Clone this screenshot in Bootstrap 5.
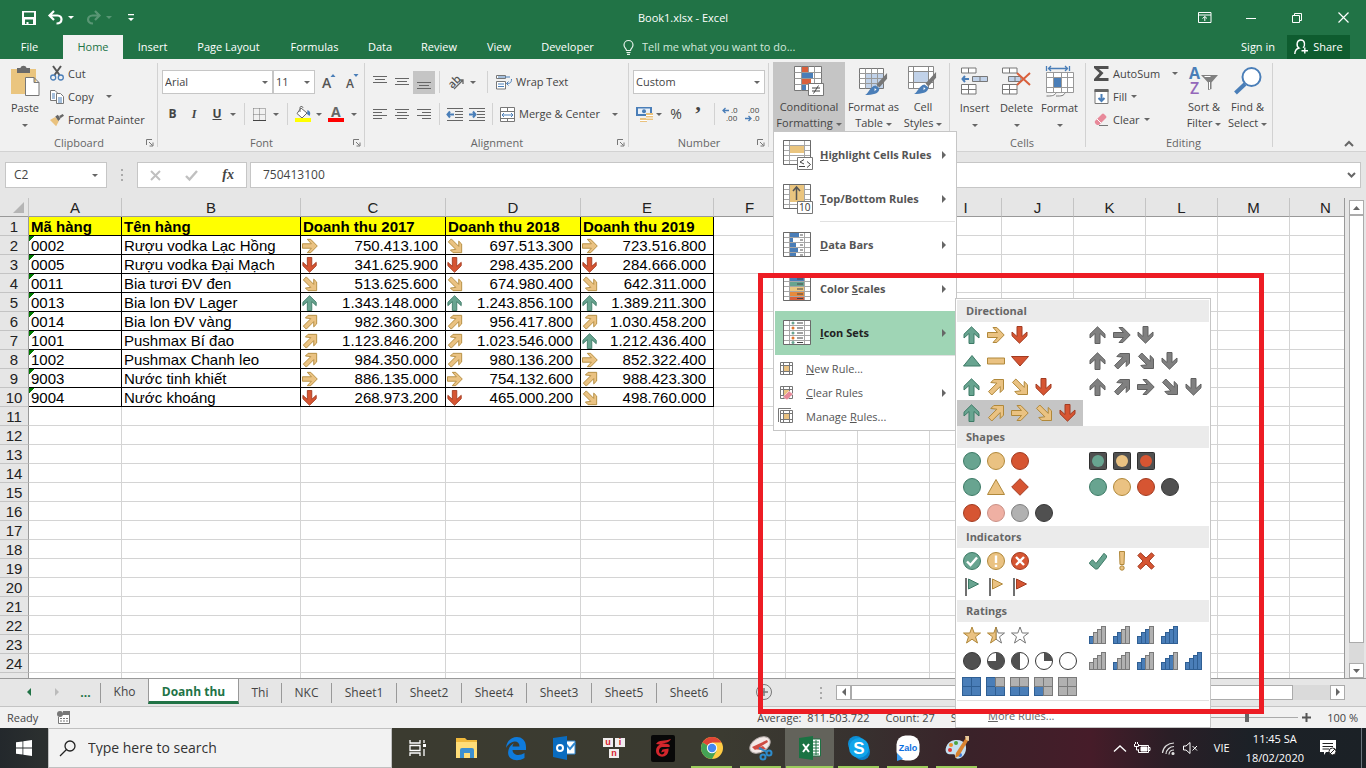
<!DOCTYPE html>
<html lang="en">
<head>
<meta charset="utf-8">
<meta name="viewport" content="width=device-width, initial-scale=1">
<title>Book1.xlsx - Excel</title>
<link rel="stylesheet" href="https://cdn.jsdelivr.net/npm/bootstrap@5.3.0/dist/css/bootstrap.min.css">
<style>
:root{--green:#217346;--line:#d4d4d4;--edge:#c6c6c6;--ink:#444}
body{font-family:"Open Sans","Noto Sans",sans-serif;font-size:11px;line-height:16px;color:var(--ink);background:#e6e6e6}
button,input,select{font:inherit;color:inherit}
button{background:none;border:0;padding:0;text-align:center}
svg{display:block;flex:none;overflow:visible}
.s12{font-size:12px}
.caret{display:inline-block;flex:none;width:0;height:0;border:3px solid transparent;border-top-color:#666;border-bottom:0}
.caret.inv{border-top-color:#fff}
.ln{fill:none;stroke:#666}
/* title bar */
.titlebar{height:35px;background:var(--green);color:#fff;display:grid;grid-template-columns:1fr auto 1fr}
.quick{padding-left:22px}
.winctl{display:grid;grid-template-columns:46px 46px 46px 46px;justify-content:end}
.winctl svg{margin:auto}
.tabs{height:24px;background:var(--green);color:#fff;display:grid;grid-template-columns:59px 4px 60px 59px 93px 79px 52px 66px 54px 83px 14px 1fr auto auto}
.tabs button{color:#fff}
.tabs .on{background:#f1f1f1;color:var(--green)}
.tellme{width:200px;background:none;border:0;padding:0;color:#d3e8dc;outline:0}
.tellme::placeholder{color:#d3e8dc;opacity:1}
.share{background:#0e5c2f;width:63px;margin-right:16px}
/* ribbon */
.ribbon{height:93px;background:#f1f1f1;border-bottom:1px solid #d2d2d2;display:grid;grid-template-columns:158px 207px 264px 140px 181px 136px 187px 1fr}
.grp{position:relative;padding:3px 0 0;display:flex;flex-direction:column}
.grp::after{content:"";position:absolute;right:0;top:4px;bottom:4px;width:1px;background:#d2d2d2}
.grp.last::after{display:none}
.gbody{height:70px}
.glabel{display:grid;grid-template-columns:1fr auto;text-align:center;color:#666;padding:3px 4px 0 12px;align-items:center}
.vr1{width:1px;height:22px;background:#d2d2d2;justify-self:center}
.big{display:flex;flex-direction:column;align-items:center;height:69px;white-space:nowrap}
.big .pic{height:38px;display:flex;align-items:center;justify-content:center}
.row3{display:grid;grid-template-rows:23px 23px 23px;justify-items:start}
.row3 button{display:flex;align-items:center;gap:4px;white-space:nowrap}
.tools{display:grid;align-items:center;justify-items:center;height:32px}
.tools button{display:flex;align-items:center;justify-content:center;width:22px;height:23px}
.clip-tools{grid-template-columns:50px 1fr}
.style-tools{grid-template-columns:4px 72px 57px 42px}
.cell-tools{grid-template-columns:4px 41px 43px 43px}
.edit-tools{grid-template-columns:8px 88px 44px 43px}
.font-a{grid-template-columns:111px 42px 27px 20px}
.font-b{grid-template-columns:21px 22px 24px 8px 14px 16px 18px 4px 28px 4px 30px 6px}
.align-a{grid-template-columns:22px 22px 22px 9px 24px 10px 18px 1fr}
.align-b{grid-template-columns:22px 22px 22px 9px 22px 22px 8px 1fr}
.num-b{grid-template-columns:22px 8px 26px 18px 14px 18px 26px}
.ital{font-family:"Liberation Serif",serif}
.fx{font:italic 700 14px/18px "Liberation Serif",serif}
.pct{font-size:14px}
.comma{font:700 22px/44px "Liberation Serif",serif}
.pick{appearance:none;height:24px;width:100%;border:1px solid var(--edge);border-radius:0;padding:0 2px;background:#fff url("data:image/svg+xml,%3Csvg xmlns='http://www.w3.org/2000/svg' width='6' height='3'%3E%3Cpath d='M0 0h6L3 3z' fill='%23666'/%3E%3C/svg%3E") no-repeat right 4px center}
.pressed{background:#c5c5c5}
/* formula bar */
.fbar{height:46px;padding:10px 5px;display:grid;grid-template-columns:102px 30px 110px 3px 1fr}
.fbox{background:#fff;border:1px solid var(--edge);height:26px;display:flex;align-items:center}
.fbox input{border:0;background:none;outline:0;min-width:0;flex:1}
/* worksheet */
.sheetarea{flex:1;min-height:0;display:grid;grid-template-columns:minmax(0,1fr) 21px;border-bottom:1px solid #999;overflow:hidden}
.gridwrap{overflow:hidden;border-right:1px solid #999}
.cells{border-collapse:separate;border-spacing:0;table-layout:fixed;width:1361px;background:#fff;font:15px/17px "Liberation Sans",Arial,sans-serif;color:#000}
.cells th,.cells td{height:19px;padding:1px 2px 0;border-right:1px solid var(--line);border-bottom:1px solid var(--line);white-space:nowrap;overflow:hidden;font-weight:400}
.cells thead th{background:#e6e6e6;border-color:#c4c4c4;border-bottom-color:#999;text-align:center;padding:1px 0 0;color:#222}
.cells tbody th{background:#e6e6e6;text-align:center;border-right-color:#999;border-bottom-color:#c4c4c4;padding:1px 0 0;color:#222}
.cells td.bx{border-color:#000}
.cells tr.hd td.bx{background:#ff0;font-weight:700;padding-top:0}
.cells td.er{background:linear-gradient(135deg,#007a00 4px,transparent 4px) no-repeat}
.cells td.val{padding-left:1px}
.num{display:flex;justify-content:space-between;align-items:center;padding-right:5px;height:17px}
.vscroll{display:flex;flex-direction:column;padding:2px 2px 0 4px}
.sbtn{border:1px solid #ababab;background:#fff;width:15px;height:15px;flex:none;display:flex;align-items:center;justify-content:center}
.track{background:#dadada;flex:1}
.thumb{background:#fff;border:1px solid #ababab}
.vtrack{padding-bottom:20px}
.htrack{height:15px;padding-right:37px}
.hscroll{padding-right:21px}
/* sheet tabs */
.stabs{height:28px;border-bottom:1px solid #c4c4c4;display:grid;grid-template-columns:15px 28px 28px 30px 47px 91px 43px 50px repeat(6,65px) 84px 30px 1fr;font-size:12px}
.stabs button{position:relative;padding-bottom:1px}
.stabs .dv{border-right:1px solid #999;height:20px;margin-top:4px}
.stabs .act{background:#fff;color:var(--green);font-weight:700;border:1px solid #999;border-top:0;border-bottom:3px solid var(--green);height:25px;font-size:12px;padding:4px 0 0}
.stabs .more{color:var(--green);font-weight:700}
.status{height:21px;background:#f1f1f1;display:flex;align-items:center;padding:0 8px 0 7px}
.sums{width:434px}
.zoomr{appearance:none;width:103px;height:12px;background:linear-gradient(#aaa,#aaa) center/100% 1px no-repeat}
.zoomr::-webkit-slider-thumb{appearance:none;width:4px;height:9px;background:#666}
/* conditional formatting menus */
.cmenu{position:absolute;z-index:5;left:773px;top:131px;width:184px;background:#fff;border:1px solid var(--edge);padding:1px;color:#444}
.mi{display:grid;grid-template-columns:44px 1fr 15px;align-items:center;height:44px;width:100%;text-align:left;font-weight:700;color:#555;padding-left:1px}
.mi svg{margin-left:7px}
.mi .tri,.ms .tri{width:0;height:0;border:4px solid transparent;border-left-color:#666;border-right:0;margin-left:2px}
.mi.hot{background:#9fd5b5;color:#222}
.ms{display:grid;grid-template-columns:31px 1fr 15px;align-items:center;height:24px;width:100%;text-align:left;color:#555}
.ms svg{margin-left:3px}
.msep{height:2px;border-top:1px solid #e1e1e1;margin-left:45px}
.gallery{position:absolute;z-index:6;left:955px;top:298px;width:256px;background:#fff;border:1px solid var(--edge);padding:1px}
.gh{background:#ebebeb;height:22px;line-height:22px;padding-left:9px;font-weight:700;color:#666;font-size:11px;margin:0}
.gr{display:grid;grid-template-columns:1fr 1fr;height:26px}
.gr button{display:flex;gap:6px;padding-left:6px;align-items:center}
.gmore{height:26px;padding:5px 0 0 31px;color:#666;text-align:left;display:block;width:100%;border-top:1px solid #e1e1e1}
.ic{stroke-width:1}
.g{fill:#68a490;stroke:#3d7a66}.y{fill:#eac282;stroke:#b0883a}.r{fill:#d65532;stroke:#a23c22}
.k{fill:#808080;stroke:#606060}.d{fill:#505050;stroke:#383838}.p{fill:#efb0a3;stroke:#c99086}.l{fill:#b1b1b1;stroke:#808080}
.marker{position:absolute;z-index:9;left:758px;top:273px;width:506px;height:441px;border:5px solid #ed1c24;pointer-events:none}
/* taskbar */
.taskbar{height:40px;color:#fff;background:linear-gradient(90deg,#23282c 0,#2b2f2f 40px,#3b3b30 392px,#3b3b31 720px,#37312f 860px,#3a2229 970px,#461c29 1090px,#2a1e26 1170px,#1c2127 1250px,#1b2126 100%);display:grid;grid-template-columns:48px 344px 50px repeat(11,49px) 1fr}
.taskbar>button{display:flex;align-items:center;justify-content:center;position:relative}
.search{background:#f2f2f2;border:1px solid #c0c0c0;display:flex;align-items:center;color:#333}
.search input{border:0;background:none;outline:0;padding:0;font-size:14px;flex:1}
.search input::placeholder{color:#333;opacity:1}
.run::after{content:"";position:absolute;left:4px;right:4px;bottom:0;height:2px;background:#9ccc5c}
.cur{background:#63635b}
.cur::after{left:1px;right:1px}
.deskedge{height:40px;border-left:1px solid #6c757d}
.logo{font-family:"Liberation Sans",sans-serif;font-weight:700}
</style>
</head>
<body>
<svg width="0" height="0" class="position-absolute" aria-hidden="true">
<defs>
<symbol id="up" viewBox="0 0 18 18"><path d="M8.500.8L16 8.200V12L11 7.500V17.500H6V7.500L1 12V8.200Z"/></symbol>
<symbol id="rt" viewBox="0 0 18 18"><path d="M17.200 9L9.800 1.500H6L10.500 6.500H.5V11.500H10.500L6 16.500H9.800Z"/></symbol>
<symbol id="dn" viewBox="0 0 18 18"><path d="M8.500 17.200L16 9.800V6L11 10.500V.5H6V10.500L1 6V9.800Z"/></symbol>
<symbol id="ne" viewBox="0 0 18 18"><path d="M3.800 4.500L6.800 1.500H16.500V11.200L13.200 14.500V8.600L4.800 17L1.500 13.600L9.900 5.200Z"/></symbol>
<symbol id="se" viewBox="0 0 18 18"><path d="M3.800 13.500L6.800 16.500H16.500V6.800L13.200 3.500V9.400L4.800 1L1.500 4.400L9.900 12.800Z"/></symbol>
<symbol id="tu" viewBox="0 0 18 18"><path d="M9 3.500L17.500 14H.5Z"/></symbol>
<symbol id="da" viewBox="0 0 18 18"><path d="M.5 6H17.500V12H.5Z"/></symbol>
<symbol id="td" viewBox="0 0 18 18"><path d="M.5 4.500H17.500L9 14Z"/></symbol>
<symbol id="ci" viewBox="0 0 18 18"><circle cx="9" cy="9" r="8.500"/></symbol>
<symbol id="tr" viewBox="0 0 18 18"><path d="M9 1.500L17.500 16.500H.5Z"/></symbol>
<symbol id="di" viewBox="0 0 18 18"><path d="M9 .7L17.300 9L9 17.300L.7 9Z"/></symbol>
<symbol id="li" viewBox="0 0 18 18"><rect x=".5" y=".5" width="17" height="17" rx="1" fill="#505050" stroke="#303030"/><circle cx="9" cy="9" r="6" stroke="none"/></symbol>
<symbol id="cok" viewBox="0 0 18 18"><circle cx="9" cy="9" r="8.500"/><path d="M4 9.500L7.500 13L14 5.500" fill="none" stroke="#fff" stroke-width="2.400"/></symbol>
<symbol id="cex" viewBox="0 0 18 18"><circle cx="9" cy="9" r="8.500"/><path d="M9 3.500V11M9 12.800V15" fill="none" stroke="#fff" stroke-width="2.400"/></symbol>
<symbol id="cno" viewBox="0 0 18 18"><circle cx="9" cy="9" r="8.500"/><path d="M5 5L13 13M13 5L5 13" fill="none" stroke="#fff" stroke-width="2.400"/></symbol>
<symbol id="ok" viewBox="0 0 18 18"><path d="M.7 10.500L3.500 7.700L7 11.500L15 1.300L17.500 3.800V5.500L8.500 17H6.500L.7 12Z"/></symbol>
<symbol id="ex" viewBox="0 0 18 18" overflow="visible"><path d="M6.500-.5H11.500L11 12.500H7Z"/><circle cx="9" cy="16" r="2.200"/></symbol>
<symbol id="no" viewBox="0 0 18 18"><path d="M.8 3.500L3.500.8L9 6L14.500.8L17.200 3.500L12 9L17.200 14.500L14.500 17.200L9 12L3.500 17.200L.8 14.500L6 9Z"/></symbol>
<symbol id="fl" viewBox="0 0 18 18"><path d="M5.500 1L15.500 6L5.500 11Z"/><path d="M3 0V18" stroke="#707070" stroke-width="2"/></symbol>
<symbol id="st" viewBox="0 0 18 18"><path d="M9 1L11.200 7H17.500L12.500 10.800L14.500 17L9 13.200L3.500 17L5.500 10.800L.5 7H6.800Z"/></symbol>
<symbol id="sh" viewBox="0 0 18 18"><path fill="#fff" stroke="#777" d="M9 1L11.200 7H17.500L12.500 10.800L14.500 17L9 13.200Z"/><path d="M9 1V13.200L3.500 17L5.500 10.800L.5 7H6.800Z"/></symbol>
<symbol id="se0" viewBox="0 0 18 18"><path fill="#fff" stroke="#777" d="M9 1L11.200 7H17.500L12.500 10.800L14.500 17L9 13.200L3.500 17L5.500 10.800L.5 7H6.800Z"/></symbol>
<symbol id="grid" viewBox="0 0 28 26"><path fill="#fff" stroke="none" d="M0 0H28V25H0Z"/><path d="M.5 .5H27.500V24.500H.5ZM.5 5.500H27.500M.5 10.500H27.500M.5 15.500H27.500M.5 20.500H27.500M6.500.5V24.500M21.500.5V24.500" fill="none" stroke="#a6a6a6"/><path d="M.5 .5H27.500V24.500H.5Z" fill="none" stroke="#6a6a6a"/></symbol>
<symbol id="lch" viewBox="0 0 8 8"><path d="M.5 6V.5H6M3 3L6.500 6.500M7 3.500V7H3.500" fill="none" stroke="#777"/></symbol>
<symbol id="brush" viewBox="0 0 24 24"><path d="M23 0L23 6L15 15L12 12Z" fill="#777"/><path d="M11 13L15 16C15 22 8 23 0 23C4 21 5 14 11 13Z" fill="#4a7eb8"/><path d="M10 16l2 1-2 2z" fill="#fff"/></symbol>
<symbol id="mini" viewBox="0 0 14 14"><path d="M.5.5H12.500V12.500H.5ZM3.500.5V12.500M9.500.5V12.500M.5 3.500H12.500M.5 9.500H12.500" fill="#fff" stroke="#777"/><path d="M4 4H9V9H4Z" fill="#eac282"/></symbol>
</defs>
</svg>

<div class="vh-100 d-flex flex-column overflow-hidden position-relative">
<header class="titlebar">
  <div class="quick d-flex align-items-center">
    <button aria-label="Save" class="me-2"><svg width="14" height="14" viewBox="0 0 14 14"><path d="M0 0H14V14H0ZM2 1.500V6H12V1.500ZM3 8.500V13H4.500V11H6.500V13H11V8.500Z" fill="#fff" fill-rule="evenodd"/></svg></button>
    <button aria-label="Undo" class="ms-1"><svg width="16" height="14" viewBox="0 0 16 14"><path d="M6 0L1.500 4.500L6 9M2 4.500H9.500C15 4.500 15 12.500 8.500 12.500" fill="none" stroke="#fff" stroke-width="2.200"/></svg></button>
    <span class="caret inv ms-1"></span>
    <button aria-label="Redo" class="ms-2 ps-1 opacity-25"><svg width="16" height="14" viewBox="0 0 16 14"><path d="M9 0L13.500 4.500L9 9M13 4.500H6.500C1 4.500 0 12.500 7 12.500" fill="none" stroke="#fff" stroke-width="2.200"/></svg></button>
    <span class="caret inv ms-1 opacity-25"></span>
    <button aria-label="Customize" class="ms-3"><svg width="6" height="8" viewBox="0 0 6 8"><path d="M0 0h6v1.200H0zM0 4h6L3 7z" fill="#fff"/></svg></button>
  </div>
  <div class="align-self-center">Book1.xlsx - Excel</div>
  <div class="winctl">
    <button aria-label="Ribbon options"><svg width="14" height="11" viewBox="0 0 14 11" fill="none" stroke="#fff"><path d="M.5.5H13V10.500H.5ZM.5 3H13M6.800 9V4.500M4.500 6.500L6.800 4.500L9 6.500"/></svg></button>
    <button aria-label="Minimize"><svg width="10" height="10"><path d="M0 5.500H10" stroke="#fff"/></svg></button>
    <button aria-label="Restore"><svg width="10" height="10" viewBox="0 0 10 10" fill="none" stroke="#fff"><path d="M.5 2.500H7.500V9.500H.5ZM2.500 2.500V.5H9.500V7.500H7.500"/></svg></button>
    <button aria-label="Close"><svg width="11" height="11"><path d="M.5.5L10.500 10.500M10.500.5L.5 10.500" stroke="#fff" stroke-width="1.200"/></svg></button>
  </div>
</header>

<nav class="tabs">
  <button>File</button><span></span><button class="on">Home</button><button>Insert</button><button>Page Layout</button><button>Formulas</button><button>Data</button><button>Review</button><button>View</button><button>Developer</button><span></span>
  <label class="d-flex align-items-center gap-2"><svg width="11" height="15" viewBox="0 0 11 15" fill="none" stroke="#e6f2ea" stroke-width="1.200"><path d="M3.500 10.500C3.500 8.500 1 8 1 5A4.500 4.500 0 0 1 10 5C10 8 7.500 8.500 7.500 10.500ZM3.500 12.500H7.500M4 14.400H7"/></svg><input class="tellme" placeholder="Tell me what you want to do..."></label>
  <button class="me-2 pe-1">Sign in</button>
  <button class="share d-flex align-items-center justify-content-center gap-1"><svg width="15" height="16" viewBox="0 0 15 16" fill="none" stroke="#fff" stroke-width="1.400"><path d="M.8 15C1 11 3 9.500 5 9C2 7 2.500 1 6.800 1S11.500 6.500 9 8.800M10.800 8.500V14.500M7.500 11.800H14"/></svg>Share</button>
</nav>

<section class="ribbon">
  <div class="grp">
    <div class="gbody clip-tools d-grid">
      <button class="big"><span class="pic"><svg width="29" height="31" viewBox="0 0 29 31"><path d="M0 3H25V28H0Z" fill="#eac57f"/><path d="M6 2H9.500C10-1 15-1 15.500 2H19V7H6Z" fill="#6a6a6a"/><path d="M14.500 11.500H23L28 16.500V29.500H14.500ZM23 11.500V16.500H28" fill="#fff" stroke="#777"/></svg></span>Paste<span class="caret mt-2"></span></button>
      <div class="row3">
        <button><svg width="14" height="15" viewBox="0 0 14 15"><path d="M3 0L9.500 9M11 0L4.500 9" stroke="#555" stroke-width="2"/><g fill="none" stroke="#4a7eb8" stroke-width="1.300"><circle cx="3.200" cy="11.500" r="2.500"/><circle cx="10.800" cy="11.500" r="2.500"/></g></svg>Cut</button>
        <button><svg width="14" height="14" viewBox="0 0 14 14"><g fill="#fff" stroke="#777"><path d="M.5.5H5L8 3.500V10.500H.5Z"/><path d="M6.500 3.500H10.500L13.500 6.500V13.500H6.500Z"/></g><path d="M2 4H5M2 6H5M2 8H5M8 8H12M8 10H12M8 12H12" stroke="#4a7eb8"/></svg>Copy<span class="caret ms-2"></span></button>
        <button><svg width="14" height="14" viewBox="0 0 16 14"><path d="M0 7L6 3.500L10 8.500L7 14Z" fill="#eac27e"/><path d="M6 3L9 1L12 5.500L9.500 8ZM10.500 2.500L14.500 0L16 2L12 5Z" fill="#666"/></svg>Format Painter</button>
      </div>
    </div>
    <div class="glabel"><span>Clipboard</span><svg width="8" height="8"><use href="#lch"/></svg></div>
  </div>

  <div class="grp">
    <div class="gbody px-1 pt-1">
      <div class="tools font-a">
        <select class="pick" aria-label="Font"><option>Arial</option></select><select class="pick" aria-label="Font size"><option>11</option></select>
        <button aria-label="Grow font"><svg width="14" height="16" viewBox="0 0 14 16"><text x="0" y="14" font-size="14" font-weight="600" fill="#555">A</text><path d="M8.500 3H13.500L11 0Z" fill="#4a7eb8"/></svg></button>
        <button aria-label="Shrink font"><svg width="13" height="16" viewBox="0 0 13 16"><text x="0" y="14" font-size="12" font-weight="600" fill="#555">A</text><path d="M7.500 0H12.500L10 3Z" fill="#4a7eb8"/></svg></button>
      </div>
      <div class="tools font-b">
        <button class="fw-bold s12" aria-label="Bold">B</button><button class="s12 fst-italic fw-bold ital" aria-label="Italic">I</button><button class="fw-bold s12 text-decoration-underline" aria-label="Underline">U</button><span class="caret"></span><span class="vr1"></span>
        <button aria-label="Borders"><svg width="13" height="13" viewBox="0 0 13 13" fill="none" stroke="#777"><path d="M.5.5H12.500V12M.5.5V12M6.500.5V12M.5 6.500H12.500" stroke-dasharray="1 1"/><path d="M0 12.500H13" stroke="#444"/></svg></button><span class="caret"></span><span class="vr1"></span>
        <button aria-label="Fill color"><svg width="17" height="16" viewBox="0 0 17 16"><path d="M6 2L12 7L7 12L2 7.500ZM5 6V1.500C5 0 8 0 8 2" fill="#fff" stroke="#666"/><path d="M12.500 4C15 5 16 7 14.500 10L12 8Z" fill="#4a7eb8"/><path d="M0 12H16V16H0Z" fill="#ff0"/></svg></button><span class="caret"></span>
        <button aria-label="Font color"><svg width="16" height="16" viewBox="0 0 16 16"><text x="3" y="11" font-size="14" font-weight="700" fill="#666">A</text><path d="M0 12H16V16H0Z" fill="red"/></svg></button><span class="caret"></span>
      </div>
    </div>
    <div class="glabel"><span>Font</span><svg width="8" height="8"><use href="#lch"/></svg></div>
  </div>

  <div class="grp">
    <div class="gbody pt-1 ps-1">
      <div class="tools align-a">
        <button aria-label="Top"><svg width="14" height="14" class="ln"><path d="M0 1.500H14M2 4.500H12M0 7.500H14"/></svg></button><button aria-label="Middle"><svg width="14" height="14" class="ln"><path d="M0 3.500H14M2 6.500H12M0 9.500H14"/></svg></button><button class="pressed" aria-label="Bottom"><svg width="14" height="14" class="ln"><path d="M0 7.500H14M2 10.500H12M0 13.500H14"/></svg></button><span class="vr1"></span>
        <button aria-label="Orientation"><svg width="18" height="16" viewBox="0 0 18 16"><text x="2" y="13" font-size="11" font-weight="600" fill="#555" transform="rotate(-45 6 10)">ab</text><path d="M7 15L16 6M12 6H16V10" fill="none" stroke="#666" stroke-width="1.300"/></svg></button><span class="caret"></span><span class="vr1"></span>
        <button class="w-100 justify-content-start gap-1"><svg width="16" height="15" viewBox="0 0 16 15"><path d="M.5.5H9.500V3.500H.5ZM.5 6.500H9.500V14H.5Z" fill="#fff" stroke="#777"/><path d="M2 2H14M2 9H8M2 11.500H8M15.500 4C15.500 8 14 8.500 10.500 8.500M12.500 6.500L10.500 8.500L12.500 10.500" fill="none" stroke="#4a7eb8"/></svg>Wrap Text</button>
      </div>
      <div class="tools align-b">
        <button aria-label="Left"><svg width="14" height="12" class="ln"><path d="M0 1.500H14M0 4.500H9M0 7.500H14M0 10.500H9"/></svg></button><button aria-label="Center"><svg width="14" height="12" class="ln"><path d="M0 1.500H14M2 4.500H12M0 7.500H14M2 10.500H12"/></svg></button><button aria-label="Right"><svg width="14" height="12" class="ln"><path d="M0 1.500H14M5 4.500H14M0 7.500H14M5 10.500H14"/></svg></button><span class="vr1"></span>
        <button aria-label="Decrease indent"><svg width="16" height="13" class="ln"><path d="M0 .5H16M8 3.500H16M8 6.500H16M8 9.500H16M0 12.500H16"/><path d="M0 6.500H7M3 3.500L.5 6.500L3 9.500" stroke="#4a7eb8" stroke-width="2"/></svg></button><button aria-label="Increase indent"><svg width="16" height="13" class="ln"><path d="M0 .5H16M8 3.500H16M8 6.500H16M8 9.500H16M0 12.500H16"/><path d="M0 6.500H7M4 3.500L6.500 6.500L4 9.500" stroke="#4a7eb8" stroke-width="2"/></svg></button><span class="vr1"></span>
        <button class="w-100 justify-content-start ps-1 gap-1"><svg width="15" height="15" viewBox="0 0 15 15"><path d="M.5.5H14.500V14.500H.5ZM.5 4.500H14.500M.5 11.500H14.500M7.500.5V4.500M7.500 11.500V14.500" fill="#fff" stroke="#777"/><path d="M2 8H13M4 6L2 8L4 10M11 6L13 8L11 10" fill="none" stroke="#4a7eb8"/></svg>Merge &amp; Center<span class="caret ms-2"></span></button>
      </div>
    </div>
    <div class="glabel"><span>Alignment</span><svg width="8" height="8"><use href="#lch"/></svg></div>
  </div>

  <div class="grp">
    <div class="gbody px-1 pt-1">
      <div class="tools"><select class="pick" aria-label="Number format"><option>Custom</option></select></div>
      <div class="tools num-b">
        <button aria-label="Currency"><svg width="17" height="15" viewBox="0 0 17 15"><path d="M0 0H16V9H0Z" fill="#4a7eb8"/><path d="M2 1.500H14V7H2Z" fill="#e9f0f8"/><circle cx="8" cy="4.300" r="2" fill="#4a7eb8"/><path d="M10 6H17V13H10ZM4 11H11V15H4Z" fill="#eac27e"/><path d="M10 8.500H17M10 11H17M4 13.500H11" stroke="#fff"/></svg></button><span class="caret"></span><button aria-label="Percent" class="pct">%</button><button class="comma" aria-label="Comma">’</button><span class="vr1"></span>
        <button aria-label="Increase decimal"><svg width="15" height="15" viewBox="0 0 15 15"><text x="8" y="6" font-size="8" fill="#444">.0</text><text x="3" y="14" font-size="8" fill="#444">.00</text><path d="M0 3.500H6M2.500 1L0 3.500L2.500 6" fill="none" stroke="#4a7eb8" stroke-width="1.300"/></svg></button>
        <button aria-label="Decrease decimal"><svg width="15" height="15" viewBox="0 0 15 15"><text x="3" y="6" font-size="8" fill="#444">.00</text><text x="8" y="14" font-size="8" fill="#444">.0</text><path d="M0 11.500H6M3.500 9L6 11.500L3.500 14" fill="none" stroke="#4a7eb8" stroke-width="1.300"/></svg></button>
      </div>
    </div>
    <div class="glabel"><span>Number</span><svg width="8" height="8"><use href="#lch"/></svg></div>
  </div>

  <div class="grp">
    <div class="gbody style-tools d-grid">
      <span></span>
      <button class="big pressed"><span class="pic"><svg width="30" height="30" viewBox="0 0 30 30"><path d="M.5.5H27.500V24.500H.5Z" fill="#fff" stroke="#777"/><path d="M.5 6.500H27.500M.5 12.500H27.500M.5 18.500H27.500M7.500.5V24.500M14.500.5V24.500M20.500.5V24.500" stroke="#999"/><path d="M8 1H14V6H8ZM8 13H17V18H8Z" fill="#d9603c"/><path d="M8 7H19V12H8ZM8 19H12V24H8Z" fill="#4a7eb8"/><path d="M14.500 17.500H29.500V29.500H14.500Z" fill="#fff" stroke="#777"/><path d="M18 22H26M18 25H26M24.500 19.500L19.500 27.500" stroke="#444"/></svg></span>Conditional<span>Formatting <i class="caret align-middle"></i></span></button>
      <button class="big"><span class="pic"><svg width="30" height="30" viewBox="0 0 30 30"><path d="M.5 2.500H24.500V22.500H.5Z" fill="#fff" stroke="#777"/><path d="M7 8H24V22H7Z" fill="#c1d2e9"/><path d="M.5 7.500H24.500M.5 12.500H24.500M.5 17.500H24.500M6.500 2.500V22.500M12.500 2.500V22.500M18.500 2.500V22.500" stroke="#999"/><use href="#brush" x="6" y="7" width="23" height="23"/></svg></span>Format as<span>Table <i class="caret align-middle"></i></span></button>
      <button class="big"><span class="pic"><svg width="30" height="30" viewBox="0 0 30 30"><path d="M.5.5H25.500V22.500H.5ZM.5 5.500H25.500M.5 16.500H25.500M5.500.5V22.500M20.500.5V22.500" fill="#fff" stroke="#888"/><path d="M6 6H20V16H6Z" fill="#c1d2e9"/><use href="#brush" x="6" y="6" width="23" height="23"/></svg></span>Cell<span>Styles <i class="caret align-middle"></i></span></button>
    </div>
  </div>

  <div class="grp">
    <div class="gbody cell-tools d-grid">
      <span></span>
      <button class="big"><span class="pic"><svg width="27" height="28" viewBox="0 0 27 28"><path d="M.5 1H15V6H.5ZM7.500 1V6M.5 17.500H15V27H.5ZM7.500 17.500V27M.5 22.500H15" fill="#fff" stroke="#777"/><path d="M11.500 9.500H26.500V14.500H11.500ZM19 9.500V14.500" fill="#c1d2e9" stroke="#777"/><path d="M1 12H8M4 9L1.500 12L4 15" fill="none" stroke="#4a7eb8" stroke-width="2"/></svg></span>Insert<span class="caret mt-2"></span></button>
      <button class="big"><span class="pic"><svg width="29" height="28" viewBox="0 0 29 28"><path d="M.5 1H15V6H.5ZM7.500 1V6M.5 17.500H15V27H.5ZM7.500 17.500V27M.5 22.500H15" fill="#fff" stroke="#777"/><path d="M6.500 9.500H19V14.500H6.500ZM13 9.500V14.500" fill="#c1d2e9" stroke="#777"/><path d="M15 6L28 18M28 6L15 18" stroke="#d9603c" stroke-width="2"/></svg></span>Delete<span class="caret mt-2"></span></button>
      <button class="big"><span class="pic"><svg width="28" height="32" viewBox="0 0 28 32"><path d="M.5 1V6M23.500 1V6M2 3.500H22M5 1L2.500 3.500L5 6M19 1L21.500 3.500L19 6" fill="none" stroke="#4a7eb8" stroke-width="1.300"/><path d="M.5 7.500H27.500V27.500H.5ZM.5 12.500H27.500M.5 22.500H27.500M7.500 7.500V27.500M15.500 7.500V27.500M21.500 7.500V27.500" fill="#fff" stroke="#999"/><path d="M8 13H15V22H8Z" fill="#4a7eb8"/><path d="M.5 31C5 31 9 31 10 27.500M10 31C15 31 18 31 19 27.500" fill="#fff" stroke="#777"/></svg></span>Format<span class="caret mt-2"></span></button>
    </div>
    <div class="glabel"><span>Cells</span></div>
  </div>

  <div class="grp">
    <div class="gbody edit-tools d-grid">
      <span></span>
      <div class="row3">
        <button><svg width="15" height="15" viewBox="0 0 15 15"><path d="M0 0H14.500V3H5L9.500 7L5 12H14.500V15H0V13L5.500 7L0 2Z" fill="#505050"/></svg><span>AutoSum</span><span class="caret ms-2"></span></button>
        <button><svg width="15" height="15" viewBox="0 0 15 15"><path d="M1 1H14V14.500H1Z" fill="#fff" stroke="#777"/><path d="M.5 0H14.500V3H.5Z" fill="#666"/><path d="M7.500 5V12M4.500 9L7.500 12L10.500 9" fill="none" stroke="#4a7eb8" stroke-width="2"/></svg>Fill<span class="caret"></span></button>
        <button><svg width="15" height="13" viewBox="0 0 15 13"><path d="M1 8L8 1Q9 0 10 1L12 3Q13 4 12 5L5 12H3Q0 10 1 8Z" fill="#e8899a"/><path d="M3 6L7 10" stroke="#fff"/><path d="M5 12.500H14" stroke="#777"/></svg>Clear<span class="caret"></span></button>
      </div>
      <button class="big"><span class="pic"><svg width="30" height="28" viewBox="0 0 30 28"><text x="0" y="12" font-size="16" font-weight="700" fill="#4a7eb8">A</text><text x="1" y="27" font-size="16" font-weight="600" fill="#9468ba">Z</text><path d="M12 8H29L22.500 15.500V22L19 23V15.500Z" fill="#808080"/><path d="M15.500 9.500H21.500" stroke="#fff"/><path d="M20 15h1v7h-1z" fill="#fff"/></svg></span>Sort &amp;<span>Filter <i class="caret align-middle"></i></span></button>
      <button class="big"><span class="pic"><svg width="28" height="28" viewBox="0 0 28 28"><path d="M1.500 26L11 17" stroke="#4a7eb8" stroke-width="4"/><circle cx="17.500" cy="10" r="9" fill="#fff" stroke="#4a7eb8" stroke-width="2"/></svg></span>Find &amp;<span>Select <i class="caret align-middle"></i></span></button>
    </div>
    <div class="glabel"><span>Editing</span></div>
  </div>
  <div class="grp last align-items-end justify-content-end pe-2 pb-1"><button aria-label="Collapse ribbon" class="me-1"><svg width="10" height="7"><path d="M1 6L5 2L9 6" fill="none" stroke="#666" stroke-width="2"/></svg></button></div>
</section>

<div class="fbar s12">
  <div class="fbox"><input class="ps-2 pe-0" value="C2" aria-label="Name box"><span class="caret me-2"></span></div>
  <div class="d-flex align-items-center justify-content-center"><svg width="2" height="12"><path d="M0 0H2V2H0ZM0 5H2V7H0ZM0 10H2V12H0Z" fill="#aaa"/></svg></div>
  <div class="fbox justify-content-around">
    <button aria-label="Cancel"><svg width="11" height="11"><path d="M1 1L10 10M10 1L1 10" stroke="#c0c0c0" stroke-width="2"/></svg></button>
    <button aria-label="Enter"><svg width="13" height="11"><path d="M1 6L4.500 9.500L12 1" fill="none" stroke="#c0c0c0" stroke-width="2.400"/></svg></button>
    <button aria-label="Insert function" class="fx">fx</button>
  </div>
  <span></span>
  <div class="fbox pe-1"><input class="ps-2 ms-1" value="750413100" aria-label="Formula"><button aria-label="Expand"><svg width="9" height="6"><path d="M1 1L4.500 4.500L8 1" fill="none" stroke="#666" stroke-width="2"/></svg></button></div>
</div>

<main class="sheetarea">
  <div class="gridwrap"><table class="cells"><colgroup><col width="29"><col width="93"><col width="179"><col width="145"><col width="135"><col width="133"><col width="72"><col width="72"><col width="72"><col width="72"><col width="72"><col width="72"><col width="72"><col width="72"><col width="72"></colgroup><thead><tr id="heads"></tr></thead><tbody id="rows"></tbody></table></div>
  <div class="vscroll"><button class="sbtn" aria-label="Up"><svg width="7" height="4"><path d="M0 4H7L3.500 0Z" fill="#666"/></svg></button><div class="track vtrack d-flex flex-column"><div class="thumb flex-grow-1"></div></div><button class="sbtn" aria-label="Down"><svg width="7" height="4"><path d="M0 0H7L3.500 4Z" fill="#666"/></svg></button></div>
</main>

<nav class="stabs">
  <span></span><button aria-label="Previous sheets"><svg class="m-auto" width="4" height="8"><path d="M4 0V8L0 4Z" fill="#217346"/></svg></button><button aria-label="Next sheets"><svg class="m-auto" width="4" height="8"><path d="M0 0V8L4 4Z" fill="#bbb"/></svg></button><button class="dv more">...</button>
  <button>Kho</button><button class="act">Doanh thu</button><button class="dv">Thi</button><button class="dv">NKC</button><button class="dv">Sheet1</button><button class="dv">Sheet2</button><button class="dv">Sheet4</button><button class="dv">Sheet3</button><button class="dv">Sheet5</button><button class="dv">Sheet6</button>
  <button aria-label="New sheet"><svg class="m-auto" width="16" height="16" fill="none" stroke="#777"><circle cx="8" cy="8" r="7.500"/><path d="M8 4V12M4 8H12" stroke-width="1.500"/></svg></button>
  <div class="d-flex align-items-center justify-content-center"><svg width="2" height="12"><path d="M0 0H2V2H0ZM0 5H2V7H0ZM0 10H2V12H0Z" fill="#aaa"/></svg></div>
  <div class="hscroll d-flex align-items-center"><button class="sbtn" aria-label="Left"><svg width="4" height="8"><path d="M4 0V8L0 4Z" fill="#666"/></svg></button><div class="track htrack d-flex"><div class="thumb flex-grow-1"></div></div><button class="sbtn" aria-label="Right"><svg width="4" height="8"><path d="M0 0V8L4 4Z" fill="#666"/></svg></button></div>
</nav>

<footer class="status">
  <span>Ready</span><svg class="ms-3" width="17" height="13" viewBox="-3 0 17 13"><path d="M3.500 3.500H12.500V12.500H1.500V6" fill="#fff" stroke="#777"/><path d="M6 0H13V4H6Z" fill="#777"/><circle cx="3" cy="3" r="3" fill="#777"/><path d="M3 7.500H12M3 10H12" stroke="#777" stroke-dasharray="2 1"/></svg>
  <div class="sums ms-auto d-flex gap-3"><span>Average:&nbsp; 811.503.722</span><span>Count: 27</span><span>Sum: 21.910.600.500</span></div>
  <input type="range" class="zoomr ms-1" aria-label="Zoom" min="0" max="100" value="50">
  <button aria-label="Zoom in" class="ms-1 me-3"><svg width="9" height="9"><path d="M0 4.500H9M4.500 0V9" stroke="#555" stroke-width="2"/></svg></button><span>100 %</span>
</footer>

<footer class="taskbar">
  <button aria-label="Start"><svg width="16" height="16"><path d="M0 2.300L6.500 1.400V7.600H0ZM7.300 1.300L16 0V7.600H7.300ZM0 8.400H6.500V14.600L0 13.700ZM7.300 8.400H16V16L7.300 14.700Z" fill="#fff"/></svg></button>
  <label class="search"><svg class="ms-2 me-2" width="19" height="17"><g fill="none" stroke="#222" stroke-width="1.300"><circle cx="13" cy="6" r="5"/><path d="M9.500 9.500L3 16"/></g></svg><input class="ms-1" placeholder="Type here to search"></label>
  <button aria-label="Task view"><svg width="17" height="16" fill="none" stroke="#fff" stroke-width="1.300"><path d="M1 0V3H11V0M1 5.500H11V10.500H1ZM1 16V13H11V16M15 0V3M15 9V16"/><path d="M14 4h3v3h-3z" fill="#fff" stroke="none"/></svg></button>
  <button aria-label="File Explorer"><svg width="22" height="20"><path d="M0 0H9L11 2H21V20H0Z" fill="#f0b93c"/><path d="M0 4H21V20H0Z" fill="#ffdd78"/><path d="M4 20V12Q4 10 6 10H16Q18 10 18 12V20H14V15H8V20Z" fill="#3c8fd0"/></svg></button>
  <button aria-label="Edge"><svg width="20" height="23" viewBox="0 0 20 23"><path d="M0 11C1-3 20-4 20 10V13H6.500C7 19 14 19 18.500 16V21C10 26 0 22 2.500 13C3.500 9 6 7 8.500 6C7 7 6.500 8.500 6.500 9.500H13.500C13.500 2 4 3 0 11Z" fill="#0f7bdc"/></svg></button>
  <button aria-label="Outlook"><svg width="23" height="24" viewBox="0 0 23 24"><path d="M12 5H22V18H12Z" fill="#fff" stroke="#2d87d2"/><path d="M13 8L17 13L22 7" fill="none" stroke="#2d87d2" stroke-width="2"/><path d="M0 2L14 0V24L0 21Z" fill="#0a6cc0"/><circle cx="7" cy="12" r="3" fill="none" stroke="#fff" stroke-width="2"/></svg></button>
  <button aria-label="UniKey"><svg width="22" height="22" viewBox="0 0 22 22" class="logo" font-size="9" fill="#d8222c" text-anchor="middle"><path d="M0 1H10V10H0ZM12 1H22V10H12ZM6 12H16V21H6Z" fill="#f1eeee"/><text x="5" y="8">u</text><text x="17" y="8">i</text><text x="11" y="19">n</text></svg></button>
  <button aria-label="Garena"><svg width="24" height="27" viewBox="0 0 24 27"><rect width="24" height="27" rx="2" fill="#080808"/><path d="M5 9C8 4 13 7 20 4C18 8 14 7.500 11 9C16 8.500 20 9 18.500 12H11C7 13 7 19 11 19.500C13 19 13.500 17.500 13.500 16.500L10 17.500L11.500 14.500L17.500 13.500C18.500 24 5 24 5 15.500C5 12.500 7 10.500 9 9.500Z" fill="#d3262c"/></svg></button>
  <button aria-label="Chrome" class="run"><svg width="22" height="22" viewBox="0 0 22 22"><circle cx="11" cy="11" r="11" fill="#fc4"/><path d="M11 11L1.500 5.500A11 11 0 0 1 20.500 5.500H11Z" fill="#e04636"/><path d="M11 11L1.500 5.500A11 11 0 0 0 11 22L15.500 14Z" fill="#45a355"/><circle cx="11" cy="11" r="5.200" fill="#fff"/><circle cx="11" cy="11" r="4.200" fill="#4688f1"/></svg></button>
  <button aria-label="Snipping Tool" class="run"><svg width="24" height="25" viewBox="0 0 24 25"><ellipse cx="11" cy="9" rx="11" ry="7" transform="rotate(-30 11 9)" fill="#f3e9e7" stroke="#b9b0ae"/><path d="M3 11L18 4L19 6L6 14ZM5 13L14 10L17 13L13 14Z" fill="#cf4b42"/><g fill="none" stroke="#2e8ccc" stroke-width="2"><path d="M10 12L18 16"/><circle cx="20" cy="17" r="2.500"/><circle cx="14" cy="21" r="2.500"/></g></svg></button>
  <button aria-label="Excel" class="run cur"><svg width="22" height="24" viewBox="0 0 22 24"><path d="M12 3H21.500V20H12Z" fill="#fff" stroke="#1f7244"/><path d="M14 6H20M14 9H20M14 12H20M14 15H20M14 18H20M17 4V19" stroke="#1f7244"/><path d="M0 2L14 0V24L0 22Z" fill="#1a7343"/><path d="M4 8L10 16M10 8L4 16" stroke="#fff" stroke-width="2"/></svg></button>
  <button aria-label="Skype" class="run"><svg width="22" height="24" viewBox="0 0 22 24" class="logo"><circle cx="8" cy="8" r="8" fill="#0d8ed6"/><circle cx="14" cy="16" r="8" fill="#0b7fc9"/><circle cx="11" cy="12" r="10" fill="#10a5ea"/><text x="11" y="18" text-anchor="middle" font-size="17" fill="#fff">S</text></svg></button>
  <button aria-label="Zalo" class="run"><svg width="24" height="27" viewBox="0 0 24 27" class="logo"><rect x=".5" y=".5" width="23" height="25" rx="9" fill="#fff"/><path d="M1 18V26L7 24Z" fill="#3b9cf0"/><text x="12" y="16" text-anchor="middle" font-size="9" fill="#0b6fe0">Zalo</text></svg></button>
  <button aria-label="Paint" class="run"><svg width="24" height="25" viewBox="0 0 24 25"><path d="M10 4C20 3 23 10 20 17C17 24 10 24 10 20C10 17 7 19 3 18C-2 16 1 5 10 4Z" fill="#c4dff0"/><g><circle cx="5" cy="14" r="2" fill="#d33"/><circle cx="6" cy="9" r="2" fill="#e9902a"/><circle cx="11" cy="7" r="2" fill="#4aa33f"/><circle cx="15" cy="19" r="2" fill="#3b78d8"/></g><path d="M22 0L24 3L14 20L10 22L11 17Z" fill="#d9832f"/><path d="M20 0h4v5l-3-1z" fill="#e8c99a"/></svg></button>
  <div class="d-flex align-items-center justify-content-end pe-1">
    <svg class="me-2" width="12" height="7"><path d="M0 6.500L6 1L12 6.500" fill="none" stroke="#fff" stroke-width="1.300"/></svg>
    <svg class="me-2" width="16" height="12" viewBox="0 0 16 12" fill="none" stroke="#fff"><path d="M5 3.500H14.500V10.500H4.500V7.500M14.500 5.500H16V8.500H14.500"/><path d="M7 5H13V9H7Z" fill="#fff"/><path d="M.5 2V4.500H4.500V2M1.500 0V2M3.500 0V2M2.500 4.500V8H5"/></svg>
    <svg class="ms-1 me-2" width="13" height="13" viewBox="0 0 13 13" fill="none" stroke="#ddd" stroke-width="1.200"><path d="M.5 11C1 5 6 1 12 1M4 12C4 8 8 4.500 12 4.500M7 12.500C7 10 9 8 12 8"/><circle cx="11" cy="11.500" r="1" fill="#fff"/></svg>
    <svg class="me-3" width="15" height="12" viewBox="0 0 15 12" fill="none" stroke="#fff"><path d="M.5 4V8H3L7 11.500V.5L3 4ZM9.500 4L14 8.500M14 4L9.500 8.500"/></svg>
    <span class="me-3">VIE</span>
    <div class="text-center lh-1 d-flex flex-column gap-2"><span>11:45 SA</span><span>18/02/2020</span></div>
    <svg class="ms-3 me-4" width="17" height="16" viewBox="0 0 17 16"><path d="M0 0H16V12H6L4 15V12H0Z" fill="#fff"/><path d="M2.500 3.500H13M2.500 6.500H13M2.500 9H9" stroke="#222"/><circle cx="12.500" cy="11.500" r="3.500" fill="#fff" stroke="#222"/><path d="M10 14L15 9" stroke="#222"/></svg>
    <span class="deskedge"></span>
  </div>
</footer>

<div class="cmenu" role="menu">
  <button class="mi"><svg width="30" height="30" viewBox="0 0 30 30"><use href="#grid" width="28" height="26"/><path d="M7 6H21V13H7Z" fill="#eac57f"/><path d="M14.500 17.500H29.500V29.500H14.500Z" fill="#fff" stroke="#777"/><path d="M21 19.500L17 22L21 24M16 26.500H22M24 21.500L27.500 24.500L24 27.500" fill="none" stroke="#444"/></svg><span><u>H</u>ighlight Cells Rules</span><i class="tri"></i></button>
  <button class="mi"><svg width="30" height="30" viewBox="0 0 30 30"><use href="#grid" width="28" height="26"/><path d="M7 1H21V18H7Z" fill="#eac57f"/><path d="M13.500 16V3M10 7L13.500 3L17 7" fill="none" stroke="#555" stroke-width="1.500"/><path d="M14.500 17.500H29.500V29.500H14.500Z" fill="#fff" stroke="#777"/><text x="16" y="27" font-size="10" font-weight="400" fill="#333">10</text></svg><span><u>T</u>op/Bottom Rules</span><i class="tri"></i></button>
  <div class="msep"></div>
  <button class="mi"><svg width="28" height="26" viewBox="0 0 28 26"><use href="#grid"/><path d="M7 1H16V5H7ZM7 6H10V10H7ZM7 11H13V15H7ZM7 16H15V20H7ZM7 21H13V24H7Z" fill="#4a7eb8"/><path d="M17 3H20M17 8H20M17 13H20M17 18H20M17 23H20" stroke="#555"/></svg><span><u>D</u>ata Bars</span><i class="tri"></i></button>
  <button class="mi"><svg width="28" height="26" viewBox="0 0 28 26"><use href="#grid"/><path d="M7 1H21V5H7Z" fill="#4a7eb8"/><path d="M7 6H21V10H7Z" fill="#68a490"/><path d="M7 11H21V15H7Z" fill="#eac57f"/><path d="M7 16H21V20H7Z" fill="#e68a3c"/><path d="M7 21H21V24H7Z" fill="#d9603c"/><path d="M14 3H20M14 8H20M14 13H20M14 18H20M14 22.500H20" stroke="#444"/></svg><span>Color <u>S</u>cales</span><i class="tri"></i></button>
  <button class="mi hot"><svg width="28" height="26" viewBox="0 0 28 26"><use href="#grid"/><g fill="#68a490"><circle cx="10" cy="3" r="1.500"/><circle cx="10" cy="13" r="1.500"/><circle cx="10" cy="22.500" r="1.500"/></g><g fill="#e0752e"><circle cx="10" cy="8" r="1.500"/><circle cx="10" cy="18" r="1.500"/></g><path d="M14 3H20M14 8H20M14 13H20M14 18H20M14 22.500H20" stroke="#444"/></svg><span><u>I</u>con Sets</span><i class="tri"></i></button>
  <div class="msep"></div>
  <button class="ms"><svg width="15" height="14"><use href="#mini" x="2" width="14" height="14"/></svg><span><u>N</u>ew Rule...</span></button>
  <button class="ms"><svg width="15" height="14"><use href="#mini" x="2" width="14" height="14"/><path d="M5 11L11 5L15 8L9 14Z" fill="#e8899a" stroke="#fff" stroke-width=".5"/></svg><span><u>C</u>lear Rules</span><i class="tri"></i></button>
  <button class="ms"><svg width="15" height="14"><path d="M.5 12V-1.500H13" fill="none" stroke="#777"/><use href="#mini" x="2" width="14" height="14"/></svg><span>Manage <u>R</u>ules...</span></button>
</div>
<div class="gallery" role="menu"><div id="gal"></div><button class="gmore"><u>M</u>ore Rules...</button></div>
<div class="marker"></div>
</div>

<script>
const ic=(c,n,s)=>`<svg class="ic ${c}" width="${s}" height="${s}"><use href="#${n}"/></svg>`;
// worksheet
const W=["Mã hàng","Tên hàng","Doanh thu 2017","Doanh thu 2018","Doanh thu 2019"];
const D=[
["0002","Rượu vodka Lạc Hồng","rt 750.413.100","se 697.513.300","rt 723.516.800"],
["0005","Rượu vodka Đại Mạch","dn 341.625.900","dn 298.435.200","dn 284.666.000"],
["0011","Bia tươi ĐV đen","se 513.625.600","se 674.980.400","se 642.311.000"],
["0013","Bia lon ĐV Lager","up 1.343.148.000","up 1.243.856.100","up 1.389.211.300"],
["0014","Bia lon ĐV vàng","ne 982.360.300","ne 956.417.800","ne 1.030.458.200"],
["1001","Pushmax Bí đao","ne 1.123.846.200","ne 1.023.546.000","up 1.212.436.400"],
["1002","Pushmax Chanh leo","ne 984.350.000","ne 980.136.200","rt 852.322.400"],
["9003","Nước tinh khiết","rt 886.135.000","rt 754.132.600","ne 988.423.300"],
["9004","Nước khoáng","dn 268.973.200","dn 465.000.200","se 498.760.000"]];
heads.innerHTML='<th><svg class="ms-auto me-1" width="11" height="11"><path d="M11 0V11H0Z" fill="#b5b5b5"/></svg></th>'+[..."ABCDEFGHIJKLMN"].map(c=>`<th>${c}</th>`).join("");
const tone={up:"g",dn:"r",rt:"y",ne:"y",se:"y"};
let out="";
for(let r=1;r<=25;r++){
  out+=`<tr class="${r==1?"hd":""}"><th>${r<25?r:""}</th>`;
  for(let c=0;c<14;c++){
    if(c>4||r>10){out+="<td></td>";continue}
    if(r==1){out+=`<td class="bx">${W[c]}</td>`;continue}
    const v=D[r-2][c];
    if(c<2)out+=`<td class="bx ${c?"":"er"}">${v}</td>`;
    else{const [a,n]=v.split(" ");out+=`<td class="bx val"><div class="num">${ic(tone[a],a,16)}<span>${n}</span></div></td>`}
  }
  out+="</tr>";
}
document.getElementById("rows").innerHTML=out;
// icon set gallery
const B=["#4a7eb8","#2f5f94"],G=["#b1b1b1","#7a7a7a"];
const bars=n=>'<svg width="18" height="18">'+[0,1,2,3].map(i=>{const k=i<n?B:G,h=[7,11,14,17][i];return `<rect x="${i*4+.5}" y="${17.5-h}" width="4" height="${h}" fill="${k[0]}" stroke="${k[1]}"/>`}).join("")+"</svg>";
const box=n=>'<svg width="18" height="18">'+[[0,9],[9,9],[0,0],[9,0]].map((p,i)=>{const k=i<n?B:G;return `<rect x="${p[0]-.5}" y="${p[1]-.5}" width="9" height="9" fill="${k[0]}" stroke="${k[1]}"/>`}).join("")+"</svg>";
const arc={4:"",3:"M9 9V.5A8.500 8.500 0 1 1 .5 9Z",2:"M9 .5A8.500 8.500 0 0 0 9 17.500Z",1:"M9 9V.5A8.500 8.500 0 0 1 17.500 9Z",0:""};
const pie=n=>`<svg width="18" height="18"><circle cx="9" cy="9" r="8.500" fill="${n==4?"#505050":"#fff"}" stroke="#383838"/><path d="${arc[n]}" fill="#505050"/></svg>`;
const draw=t=>{const [a,b]=t.split(":");return a=="bar"?bars(+b):a=="box"?box(+b):a=="pie"?pie(+b):ic(a,b,18)};
const S={
Directional:["g:up y:rt r:dn|k:up k:rt k:dn","g:tu y:da r:td|k:up k:ne k:se k:dn","g:up y:ne y:se r:dn|k:up k:ne k:rt k:se k:dn","*g:up y:ne y:rt y:se r:dn"],
Shapes:["g:ci y:ci r:ci|g:li y:li r:li","g:ci y:tr r:di|g:ci y:ci r:ci d:ci","r:ci p:ci l:ci d:ci"],
Indicators:["g:cok y:cex r:cno|g:ok y:ex r:no","g:fl y:fl r:fl"],
Ratings:["y:st y:sh y:se0|bar:1 bar:2 bar:3 bar:4","pie:4 pie:3 pie:2 pie:1 pie:0|bar:0 bar:1 bar:2 bar:3 bar:4","box:4 box:3 box:2 box:1 box:0"]};
gal.innerHTML=Object.entries(S).map(([h,rs])=>`<h6 class="gh">${h}</h6>`+rs.map(r=>'<div class="gr">'+r.replace("*","").split("|").map(s=>`<button class="${r[0]=="*"?"pressed":""}" aria-label="${h}">${s.split(" ").map(draw).join("")}</button>`).join("")+"</div>").join("")).join("");
</script>
<script src="https://cdn.jsdelivr.net/npm/bootstrap@5.3.0/dist/js/bootstrap.bundle.min.js"></script>
</body>
</html>
